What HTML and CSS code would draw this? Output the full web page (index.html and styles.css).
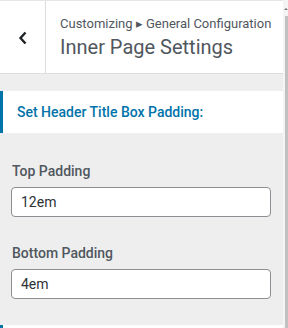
FILE: index.html
```html
<!DOCTYPE html>
<html lang="en">
<head>
    <meta charset="UTF-8">
    <meta name="viewport" content="width=device-width, initial-scale=1.0">
    <title>Inner Page Settings</title>
    <link rel="stylesheet" href="styles.css">
</head>
<body>
    <div class="customizer">
        <div class="panel">
            <!-- Cabeçalho da seção -->
            <div class="section-header">
                <div class="back-button">
                    <svg width="10" height="14" viewBox="0 0 10 14">
                        <path d="M7.5 1.5 L2.5 7 L7.5 12.5" fill="none" stroke="#1d2327" stroke-width="2.4"/>
                    </svg>
                </div>
                <div class="section-title">
                    <span class="breadcrumb">Customizing &#9656; General Configuration</span>
                    <h3 class="title">Inner Page Settings</h3>
                </div>
            </div>

            <div class="controls">
                <div class="control-heading">Set Header Title Box Padding:</div>

                <div class="control first">
                    <label class="control-label" for="top-padding">Top Padding</label>
                    <input class="control-input" id="top-padding" type="text" value="12em">
                </div>

                <div class="control">
                    <label class="control-label" for="bottom-padding">Bottom Padding</label>
                    <input class="control-input" id="bottom-padding" type="text" value="4em">
                </div>

                <div class="control-heading next"></div>
            </div>
        </div>

        <!-- Barra de rolagem -->
        <div class="scrollbar">
            <div class="scroll-arrow"></div>
            <div class="scroll-thumb"></div>
        </div>
    </div>
</body>
</html>
```

FILE: styles.css
```css
html, body {
    margin: 0;
    padding: 0;
    width: 100%;
    height: 100%;
    overflow: hidden;
    background: #eeeeee;
    font-family: Roboto, "Liberation Sans", sans-serif;
}

.customizer {
    display: flex;
    height: 328px;
}

.panel {
    flex: 1;
    background: #eeeeee;
    overflow: hidden;
}

/* Cabeçalho */
.section-header {
    display: flex;
    height: 72px;
    background: #ffffff;
    border-top: 1px solid #e6e6e6;
    border-bottom: 1px solid #dddddd;
}

.back-button {
    width: 46px;
    flex-shrink: 0;
    display: flex;
    align-items: center;
    justify-content: center;
    border-right: 1px solid #dddddd;
    padding-top: 2px;
    box-sizing: border-box;
}

.section-title {
    display: flex;
    flex-direction: column;
    justify-content: center;
    padding-left: 14px;
    padding-bottom: 1px;
}

.breadcrumb {
    font-size: 13px;
    line-height: 20px;
    color: #50575e;
}

.title {
    margin: 0;
    font-size: 20px;
    font-weight: 400;
    line-height: 26px;
    color: #50575e;
}

/* Controles */
.controls {
    padding-top: 17px;
}

.control-heading {
    height: 42px;
    display: flex;
    align-items: center;
    padding-left: 14px;
    background: #ffffff;
    border-left: 3px solid #0073aa;
    font-size: 14px;
    font-weight: 500;
    color: #0073aa;
}

.control-heading.next {
    margin-top: 26px;
}

.control {
    padding: 0 12px 0 11px;
    margin-top: 26px;
}

.control.first {
    margin-top: 28px;
}

.control-label {
    display: block;
    padding-left: 1px;
    font-size: 14px;
    font-weight: 500;
    line-height: 20px;
    color: #50575e;
    margin-bottom: 6px;
}

.control-input {
    display: block;
    width: 100%;
    height: 30px;
    box-sizing: border-box;
    margin: 0;
    padding: 0 9px;
    border: 1px solid #8c8f94;
    border-radius: 4px;
    background: #ffffff;
    font-family: Roboto, "Liberation Sans", sans-serif;
    font-size: 14px;
    color: #2c3338;
}

/* Barra de rolagem */
.scrollbar {
    width: 5px;
    flex-shrink: 0;
    background: #f4f4f4;
    display: flex;
    flex-direction: column;
    align-items: flex-end;
}

.scroll-arrow {
    height: 16px;
    width: 4px;
    position: relative;
}

.scroll-arrow::after {
    content: "";
    position: absolute;
    top: 8px;
    left: 0;
    border-left: 2px solid transparent;
    border-right: 2px solid transparent;
    border-bottom: 2px solid #777777;
}

.scroll-thumb {
    flex: 1;
    width: 3px;
    background: #c1c1c1;
}
```
